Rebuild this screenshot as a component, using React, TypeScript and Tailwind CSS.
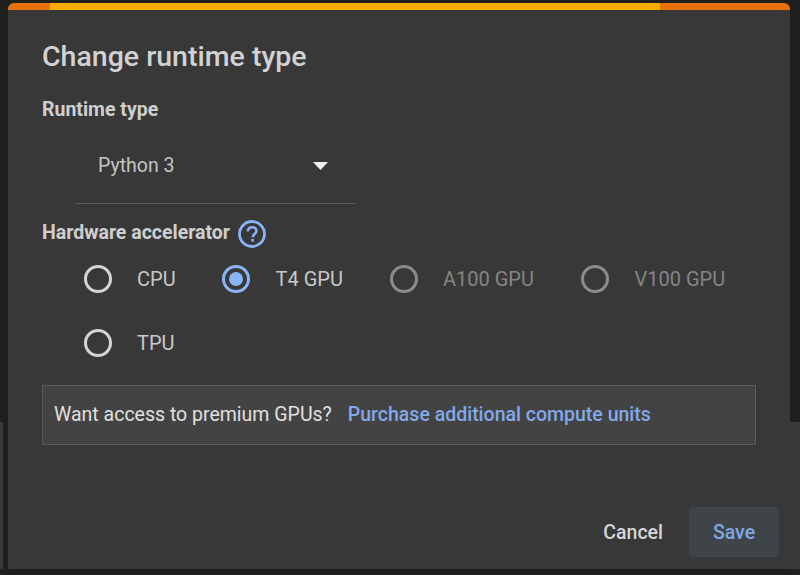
import React from "react";

function Radio({ label, checked, disabled, className }: { label: string; checked?: boolean; disabled?: boolean; className?: string }) {
  const ring = checked ? "border-[#8ab4f8]" : disabled ? "border-[#8c8c8c]" : "border-[#d4d4d4]";
  return (
    <div className={`flex items-center ${className ?? ""}`}>
      <div className={`w-[28px] h-[28px] rounded-full border-[3px] ${ring} flex items-center justify-center shrink-0`}>
        {checked && <div className="w-[14px] h-[14px] rounded-full bg-[#8ab4f8]" />}
      </div>
      <span className={`ml-[25.500px] text-[20px] leading-[28px] whitespace-nowrap ${disabled ? "text-[#858585]" : "text-[#c9c9c9]"}`}>{label}</span>
    </div>
  );
}

export default function App() {
  return (
    <div className="relative w-[800px] h-[575px] overflow-hidden bg-[#1f1f1f] pt-[3px] pl-[8px] font-['Roboto',sans-serif]">
      <div className="absolute left-0 right-0 top-[422px] bottom-[6px] bg-[#3a3a3a]" />
      <div className="absolute left-[3px] top-[422px] bottom-0 w-[5px] bg-[#1f1f1f]" />
      <div className="relative w-[782px] h-[566px] rounded-[6px] overflow-hidden bg-[#383838] flex flex-col">
        <div className="flex h-[7px] shrink-0">
          <div className="w-[42px] bg-[#e8710a]" />
          <div className="w-[610px] bg-[#f9ab00]" />
          <div className="flex-1 bg-[#e8710a]" />
        </div>
        <div className="flex flex-col flex-1 pl-[34px] pr-[34px]">
          <h1 className="mt-[29px] text-[28.500px] leading-[36px] font-medium text-[#d2d2d2]">Change runtime type</h1>
          <h2 className="mt-[22px] text-[19.500px] leading-[26px] font-bold text-[#cfcfcf]">Runtime type</h2>
          <div className="mt-[18px] ml-[33px] w-[280px] h-[63px] border-b border-[#595959] flex items-start justify-between pl-[23px] pr-[27px] pt-[11px]">
            <span className="text-[19.500px] leading-[28px] text-[#c4c4c4]">Python 3</span>
            <svg className="mt-[10px]" width="15" height="8" viewBox="0 0 15 8"><path d="M0 0h15L7.500 8z" fill="#f0f0f0" /></svg>
          </div>
          <div className="mt-[15px] flex items-center h-[28px]">
            <span className="text-[19.500px] leading-[26px] font-bold text-[#cfcfcf]">Hardware accelerator</span>
            <svg className="ml-[8px] mt-[2px]" width="28" height="28" viewBox="0 0 28 28" fill="none">
              <circle cx="14" cy="14" r="12.500" stroke="#8ab4f8" strokeWidth="2.800" />
              <path d="M9.800 11.300c.2-2.500 2-4 4.400-4 2.500 0 4.200 1.600 4.200 3.600 0 3-3.600 3.200-3.600 6.300" stroke="#8ab4f8" strokeWidth="2.600" />
              <rect x="13.300" y="19" width="2.600" height="2.600" fill="#8ab4f8" />
            </svg>
          </div>
          <div className="mt-[18px] ml-[41.500px] flex h-[28px]">
            <Radio label="CPU" className="w-[138.500px]" />
            <Radio label="T4 GPU" checked className="w-[167.500px]" />
            <Radio label="A100 GPU" disabled className="w-[191.500px]" />
            <Radio label="V100 GPU" disabled />
          </div>
          <div className="mt-[36px] ml-[41.500px] flex h-[28px]">
            <Radio label="TPU" />
          </div>
          <div className="mt-[28px] h-[60px] w-[714px] border border-[#5c5c5c] bg-[#434343] flex items-center pl-[11px] pb-[1px]">
            <span className="text-[19.500px] text-[#e0e0e0]">Want access to premium GPUs?</span>
            <span className="ml-[16px] text-[19.500px] font-medium text-[#82a9ea]">Purchase additional compute units</span>
          </div>
          <div className="mt-auto mb-[12px] flex justify-end items-center -mr-[23px]">
            <span className="pt-[2px] text-[19.500px] font-medium text-[#d6d6d6] mr-[26px]">Cancel</span>
            <div className="w-[90px] h-[50px] pt-[2px] rounded-[4px] bg-[#3f4449] flex items-center justify-center">
              <span className="text-[19.500px] font-medium text-[#7fa6e6]">Save</span>
            </div>
          </div>
        </div>
      </div>
    </div>
  );
}
